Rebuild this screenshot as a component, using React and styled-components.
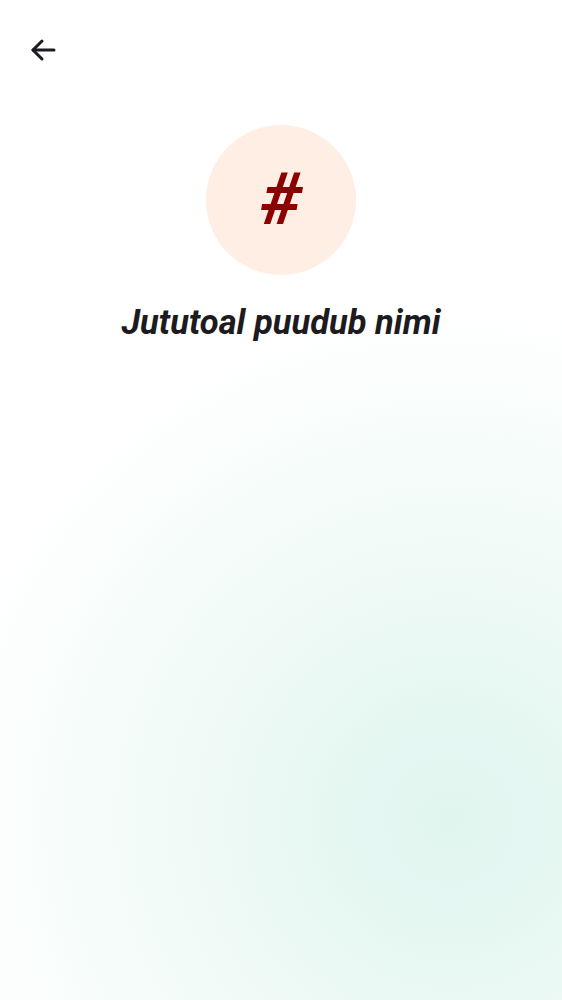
import React from 'react';
import styled, { createGlobalStyle } from 'styled-components';

const GlobalStyle = createGlobalStyle`
  html, body {
    margin: 0;
    padding: 0;
    background: #ffffff;
  }
  body {
    font-family: Roboto, "Noto Sans", sans-serif;
  }
`;

const Screen = styled.div`
  width: 562px;
  height: 1000px;
  overflow: hidden;
  background: radial-gradient(
    circle at 450px 820px,
    #e1f5ef 0px,
    #e6f7f2 120px,
    #f2fbf8 300px,
    #ffffff 520px
  );
  display: flex;
  flex-direction: column;
`;

const TopBar = styled.header`
  height: 100px;
  display: flex;
  align-items: center;
  padding: 0 19px;
  box-sizing: border-box;
`;

const IconButton = styled.button`
  width: 48px;
  height: 48px;
  border: none;
  background: transparent;
  padding: 0;
  display: flex;
  align-items: center;
  justify-content: center;
  color: #1d1b20;
  cursor: pointer;
`;

const Body = styled.main`
  display: flex;
  flex-direction: column;
  align-items: center;
  padding-top: 25px;
`;

const Avatar = styled.div`
  width: 150px;
  height: 150px;
  border-radius: 50%;
  background: #ffeee4;
  display: flex;
  align-items: center;
  justify-content: center;
`;

const Hash = styled.span`
  font-family: Roboto, sans-serif;
  font-weight: 700;
  font-style: italic;
  font-size: 72px;
  line-height: 1;
  color: #8b0000;
`;

const Title = styled.h1`
  margin: 25px 0 0;
  font-family: Roboto, sans-serif;
  font-weight: 700;
  font-style: italic;
  font-size: 34.5px;
  line-height: 44px;
  color: #1d1b20;
  letter-spacing: 0;
`;

const BackArrow = () => (
  <svg width="28" height="28" viewBox="0 0 28 28" fill="none" stroke="currentColor"
    strokeWidth="3" strokeLinecap="round" strokeLinejoin="round">
    <path d="M25 14H4" />
    <path d="M13 5 4 14l9 9" />
  </svg>
);

export default function App() {
  return (
    <>
      <GlobalStyle />
      <Screen>
        <TopBar>
          <IconButton aria-label="Tagasi">
            <BackArrow />
          </IconButton>
        </TopBar>
        <Body>
          <Avatar>
            <Hash>#</Hash>
          </Avatar>
          <Title>Jututoal puudub nimi</Title>
        </Body>
      </Screen>
    </>
  );
}
